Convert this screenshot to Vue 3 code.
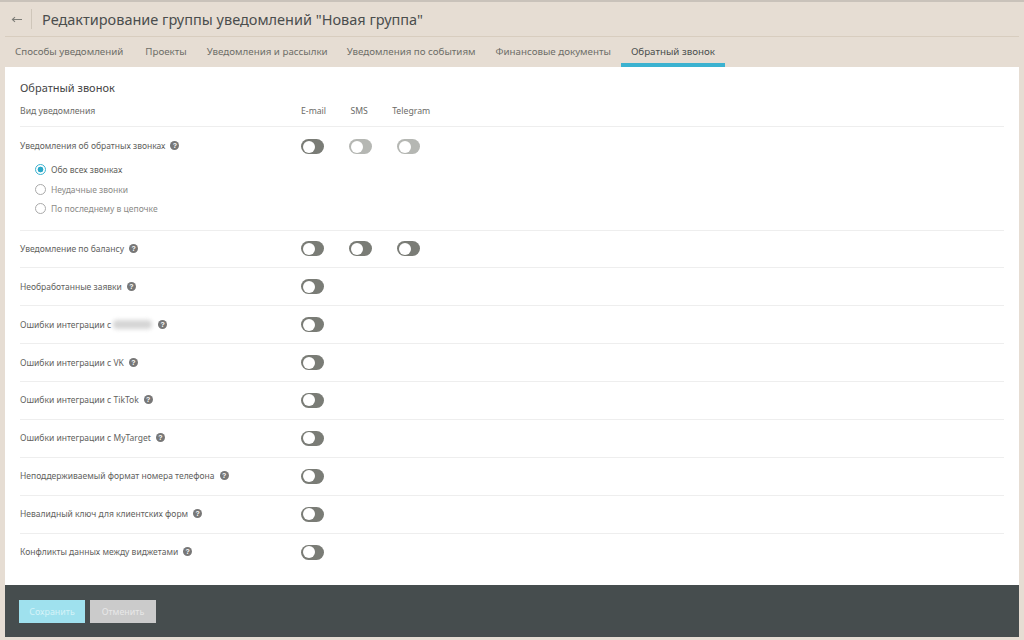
<script setup>
const tabs = ['Способы уведомлений','Проекты','Уведомления и рассылки','Уведомления по событиям','Финансовые документы','Обратный звонок']
const options = [
  { label: 'Обо всех звонках', on: true },
  { label: 'Неудачные звонки', on: false },
  { label: 'По последнему в цепочке', on: false }
]
const rows = [
  { label: 'Уведомление по балансу', count: 3 },
  { label: 'Необработанные заявки', count: 1 },
  { label: 'Ошибки интеграции с', blur: true, count: 1 },
  { label: 'Ошибки интеграции с VK', count: 1 },
  { label: 'Ошибки интеграции с TikTok', count: 1 },
  { label: 'Ошибки интеграции с MyTarget', count: 1 },
  { label: 'Неподдерживаемый формат номера телефона', count: 1 },
  { label: 'Невалидный ключ для клиентских форм', count: 1 },
  { label: 'Конфликты данных между виджетами', count: 1 }
]
</script>

<template>
  <div class="page">
    <header class="head">
      <span class="back">
        <svg width="11" height="7" viewBox="0 0 11 7"><path d="M11 3.5H1.5M4 1.2L1.4 3.5L4 5.8" fill="none" stroke="#7d7d78" stroke-width="1.1"/></svg>
      </span>
      <h1 class="title">Редактирование группы уведомлений "Новая группа"</h1>
    </header>
    <nav class="tabs">
      <a v-for="(t, i) in tabs" :key="t" class="tab" :class="{ active: i === tabs.length - 1 }">{{ t }}</a>
    </nav>
    <main class="panel">
      <div class="content">
        <h2 class="section">Обратный звонок</h2>
        <div class="colhead">
          <span class="name">Вид уведомления</span>
          <span class="headcols"><span>E-mail</span><span>SMS</span><span>Telegram</span></span>
        </div>
        <div class="row first">
          <div class="rowtop">
            <span class="name"><span>Уведомления об обратных звонках</span><i class="help">?</i></span>
            <span class="cols">
              <span class="col"><span class="toggle"></span></span>
              <span class="col"><span class="toggle dim"></span></span>
              <span class="col"><span class="toggle dim"></span></span>
            </span>
          </div>
          <ul class="radios">
            <li v-for="o in options" :key="o.label" class="radio" :class="{ on: o.on }"><span class="dot"></span>{{ o.label }}</li>
          </ul>
        </div>
        <div v-for="r in rows" :key="r.label" class="row">
          <div class="rowtop">
            <span class="name">
              <span>{{ r.label }}</span>
              <span v-if="r.blur" class="blurred"></span>
              <i class="help">?</i>
            </span>
            <span class="cols">
              <span v-for="n in r.count" :key="n" class="col"><span class="toggle"></span></span>
            </span>
          </div>
        </div>
      </div>
      <footer class="foot">
        <button class="btn save">Сохранить</button>
        <button class="btn cancel">Отменить</button>
      </footer>
    </main>
  </div>
</template>

<style>
html, body { margin: 0; background: #e6ddd3; }
</style>

<style scoped>
.page {
  width: 1024px; height: 640px; box-sizing: border-box; overflow: hidden;
  display: flex; flex-direction: column;
  background: #e6ddd3; border-top: 2px solid #c9c2ba;
  font-family: "Noto Sans", "Open Sans", sans-serif; color: #62625e;
}
.head {
  height: 35px; margin: 0 5px; flex: none; box-sizing: border-box;
  display: flex; align-items: center; border-bottom: 1px solid #d8cdbf;
}
.back { width: 27px; height: 20px; box-sizing: border-box; padding-left: 6px; display: flex; align-items: center; border-right: 1px solid #cfc6ba; }
.title { margin: 0 0 0 10px; font-size: 14.5px; font-weight: 400; color: #4a4d4d; white-space: nowrap; }
.tabs { height: 30px; flex: none; display: flex; padding-left: 5px; }
.tab { padding: 0 10px; font-size: 9.75px; line-height: 29px; color: #6d6d68; white-space: nowrap; box-sizing: border-box; }
.tab:first-child { padding-right: 12px; }
.tab:nth-child(3) { padding-right: 9px; }
.tab.active { color: #4a4d4d; border-bottom: 4px solid #3bb2d0; }
.panel { margin: 0 5px; width: 1014px; height: 570px; flex: none; display: flex; flex-direction: column; background: #fff; }
.content { flex: 1; padding: 0 15px; }
.section { margin: 0; padding-top: 13px; font-size: 11px; line-height: 16px; font-weight: 400; color: #444; }
.colhead { height: 30px; display: flex; align-items: center; border-bottom: 1px solid #eee; font-size: 8.7px; color: #6b6b68; }
.name { width: 281px; flex: none; display: flex; align-items: center; white-space: nowrap; box-sizing: border-box; }
.headcols { display: flex; gap: 24.3px; }
.cols { display: flex; }
.col { width: 48px; display: block; }
.row { border-bottom: 1px solid #eee; height: 36.9px; font-size: 8.5px; color: #62625e; }
.row:last-child { border-bottom: 0; }
.row.first { height: 102.6px; }
.rowtop { height: 36.6px; display: flex; align-items: center; }
.rowtop .name { padding-bottom: 1px; }
.first .rowtop { height: 39px; }
.first .rowtop .name { padding-bottom: 2px; }
.help { width: 9px; height: 9px; margin-left: 5px; border-radius: 50%; background: #777; color: #fff; font: 700 7px/9px "Liberation Sans", sans-serif; text-align: center; }
.blurred { width: 39px; height: 9px; margin-left: 2px; margin-right: 1px; border-radius: 4px; background: #d5d5d5; filter: blur(2px); }
.toggle { display: block; position: relative; width: 23px; height: 15px; border-radius: 8px; background: #7a7c76; }
.toggle::after { content: ""; position: absolute; left: 1.5px; top: 1.5px; width: 12px; height: 12px; border-radius: 50%; background: #fff; }
.toggle.dim { background: #b5b7b3; }
.radios { list-style: none; margin: -6px 0 0; padding: 0 0 0 15px; }
.radio { height: 19.5px; display: flex; align-items: center; color: #8b8b88; }
.radio.on { color: #5f5f5c; }
.dot { width: 9px; height: 9px; margin-right: 5px; border: 1px solid #aaa; border-radius: 50%; background: #fff; }
.radio.on .dot { border-color: #3bb2d0; background: radial-gradient(circle, #2aa7c7 0 2.6px, #fff 3.2px); }
.foot { height: 52px; flex: none; box-sizing: border-box; padding: 15px 0 0 14px; display: flex; gap: 5px; background: #464d4e; align-items: flex-start; }
.btn { width: 66px; height: 23px; padding: 0; border: 0; font: 8.9px "Noto Sans", sans-serif; }
.save { background: #9fe1ee; color: #d4f3f8; }
.cancel { background: #cbcbcb; color: #e8e8e8; }
</style>
